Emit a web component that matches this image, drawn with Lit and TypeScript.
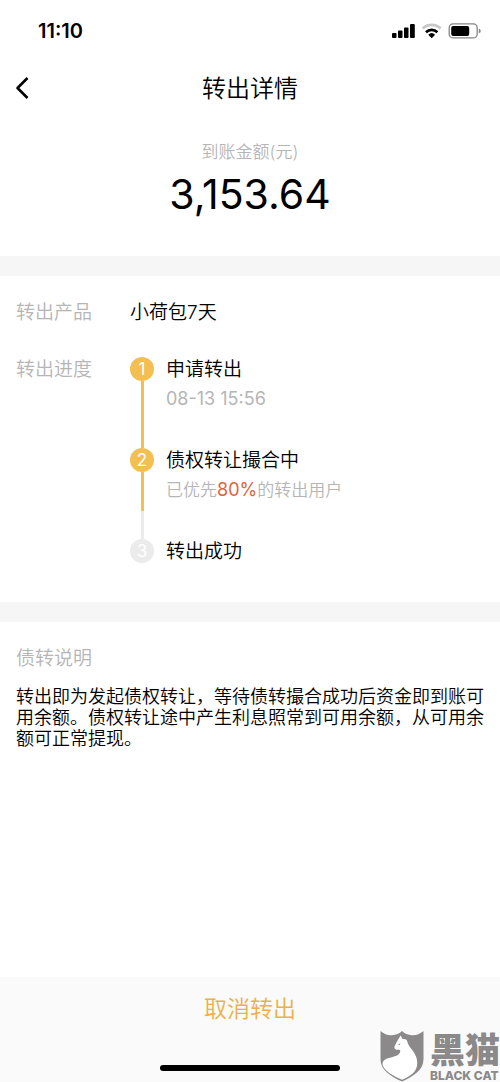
import { LitElement, html, css, nothing } from "lit";
import { customElement, property } from "lit/decorators.js";
import { classMap } from "lit/directives/class-map.js";

const base = css`
  h1,
  h2,
  h3,
  p {
    margin: 0;
  }
`;

@customElement("status-bar")
class StatusBar extends LitElement {
  static styles = [
    base,
    css`
      :host {
        box-sizing: border-box;
        display: flex;
        align-items: center;
        justify-content: space-between;
        height: 60px;
        padding: 2px 18px 0 38px;
      }
      .time {
        font-size: 20px;
        line-height: 24px;
        font-weight: 600;
      }
      .icons {
        display: block;
      }
    `,
  ];

  render() {
    return html`
      <time class="time">11:10</time>
      <svg class="icons" width="92" height="20" viewBox="0 0 92 20" role="img" aria-label="信号 无线网络 电池">
        <rect x="2" y="12" width="4.500" height="5" rx="1" />
        <rect x="8" y="9.500" width="4.500" height="7.500" rx="1" />
        <rect x="14" y="6.500" width="4.500" height="10.500" rx="1" />
        <rect x="20" y="3" width="4.800" height="14" rx="1" />
        <g fill="none" stroke-width="2.8">
          <path d="M32.800 7.400a13 13 0 0 1 17.800 0" stroke="#c8c8c8" />
          <path d="M36 11.200a8.300 8.300 0 0 1 11.400 0" stroke="#000" />
        </g>
        <path d="M38.300 13.700a5 5 0 0 1 6.800 0L41.700 17.200z" />
        <rect x="59.200" y="2.900" width="28" height="14" rx="4" fill="none" stroke="#858585" stroke-width="1.300" />
        <rect x="61.200" y="5" width="18" height="10" rx="2" />
        <path d="M88.800 7.500q2 .8 2 2.400t-2 2.400z" fill="#858585" />
      </svg>
    `;
  }
}

@customElement("progress-step")
class ProgressStep extends LitElement {
  @property({ type: Number }) index = 1;
  @property() title = "";
  @property() state: "done" | "current" | "pending" = "done";

  static styles = [
    base,
    css`
      :host {
        display: grid;
        grid-template-columns: 24px 1fr;
        column-gap: 12px;
      }
      .rail {
        display: flex;
        flex-direction: column;
        align-items: center;
      }
      .dot {
        width: 24px;
        height: 24px;
        border-radius: 50%;
        background: #f3bf51;
        color: #fff;
        font-size: 17px;
        line-height: 24px;
        font-weight: 400;
        text-align: center;
      }
      .pending {
        background: #ebebeb;
      }
      .line {
        flex: 1;
        width: 3px;
        background: #f3bf51;
      }
      .partial {
        background: linear-gradient(#f3bf51 58%, #ebebeb 58%);
      }
      .body {
        min-height: 91px;
      }
      .last {
        min-height: 24px;
      }
      .title {
        font-size: 19px;
        line-height: 26px;
        font-weight: inherit;
      }
      .note {
        margin-top: 4px;
        font-size: 17px;
        line-height: 24px;
        color: #b5b5b5;
      }
    `,
  ];

  render() {
    const pending = this.state === "pending";
    return html`
      <div class="rail">
        <span class=${classMap({ dot: true, pending })}>${this.index}</span>
        ${pending
          ? nothing
          : html`<span class=${classMap({ line: true, partial: this.state === "current" })}></span>`}
      </div>
      <div class=${classMap({ body: true, last: pending })}>
        <h3 class="title">${this.title}</h3>
        ${pending ? nothing : html`<p class="note"><slot></slot></p>`}
      </div>
    `;
  }
}

@customElement("black-cat-mark")
class BlackCatMark extends LitElement {
  static styles = [
    base,
    css`
      :host {
        display: flex;
        align-items: flex-end;
        gap: 6px;
        color: #8b8989;
      }
      .shield {
        display: block;
      }
      .words {
        display: flex;
        flex-direction: column;
      }
      .name {
        font-size: 35px;
        line-height: 38px;
        font-weight: 900;
      }
      .latin {
        font-family: Inter, "Liberation Sans", sans-serif;
        font-size: 12px;
        line-height: 13px;
        font-weight: 800;
        white-space: nowrap;
      }
    `,
  ];

  render() {
    return html`
      <svg class="shield" width="44" height="52" viewBox="0 0 44 52" aria-hidden="true">
        <path
          d="M.5 1C4 4 8 5.500 12 5.200 16 5 19.500 3.500 22 1 24.500 3.500 28 5 32 5.200 36 5.500 40 4 43.500 1V29C43.500 40 34 46 22 51.500 10 46 .5 40 .5 29z"
          fill="#8b8989"
        />
        <path
          d="M20.500 5.500C21.500 6.500 22 7.700 22.500 9 23.800 8.800 25.300 9 26.500 9.800 27.500 11.500 27.500 13 28.500 14.800 30.500 18.500 34 21.500 36 26.500 38.500 33 37.500 40 31.500 44.500 28.500 46.700 25.500 48.300 22 49.800 13.500 46 6 42 3 36 1.800 33 3 30 7 28.500 12 26.800 18 26.500 20 22.500 20.500 21 20.300 20 19 19.800 17 20 15 19.600 14.500 18 14 16.500 15.200 15.500 16 13.500 17 11 18.500 9.500 20.500 5.500z"
          fill="#fff"
        />
        <path d="M18 14.500l2.500-1.300-.8 1.800z" fill="#8b8989" />
      </svg>
      <div class="words">
        <span class="name">黑猫</span>
        <span class="latin">BLACK CAT</span>
      </div>
    `;
  }
}

@customElement("app-root")
class AppRoot extends LitElement {
  static styles = [
    base,
    css`
      :host {
        position: relative;
        display: flex;
        flex-direction: column;
        min-height: 100vh;
        overflow: hidden;
        background: #fff;
        color: #000;
        font-family: Inter, "Noto Sans CJK SC", sans-serif;
        font-weight: 350;
      }
      .nav {
        display: grid;
        grid-template-columns: 48px 1fr 48px;
        align-items: center;
        height: 56px;
      }
      .back {
        display: flex;
        align-items: center;
        height: 48px;
        padding: 0 0 0 15px;
        border: 0;
        background: none;
      }
      .heading {
        padding-top: 2px;
        font-size: 24px;
        line-height: 32px;
        font-weight: inherit;
        text-align: center;
      }
      .summary {
        padding: 24px 16px 36px;
        text-align: center;
      }
      .caption {
        font-size: 17px;
        line-height: 24px;
        color: #b5b5b5;
      }
      .amount {
        margin-top: 4px;
        font-size: 41px;
        line-height: 52px;
        font-weight: 400;
      }
      .section {
        border-top: 20px solid #f6f6f6;
        padding: 24px 16px 37px;
      }
      .row {
        display: grid;
        grid-template-columns: 114px 1fr;
      }
      .row + .row {
        margin-top: 31px;
      }
      .label {
        font-size: 19px;
        line-height: 26px;
        font-weight: inherit;
        color: #b5b5b5;
      }
      .value {
        font-size: 19px;
        line-height: 26px;
      }
      .figure {
        font-size: 18px;
        font-weight: 400;
      }
      .hot {
        color: #e0643c;
      }
      .text {
        margin-top: 14px;
        font-size: 18px;
        line-height: 21px;
      }
      .footer {
        box-sizing: border-box;
        margin-top: auto;
        display: flex;
        flex-direction: column;
        align-items: center;
        justify-content: space-between;
        height: 105px;
        padding: 8px 0 11px;
        background: #fafafa;
      }
      .cancel {
        width: 100%;
        height: 48px;
        border: 0;
        background: none;
        color: #ebb04a;
        font: inherit;
        font-size: 23px;
        line-height: 32px;
      }
      .home {
        width: 36%;
        height: 6px;
        border-radius: 3px;
        background: #000;
      }
      .mark {
        position: absolute;
        right: 0;
        bottom: 0;
      }
    `,
  ];

  render() {
    return html`
      <status-bar></status-bar>
      <header class="nav">
        <button class="back" aria-label="返回">
          <svg width="14" height="24" viewBox="0 0 14 24" fill="none" stroke="#000" stroke-width="2.600">
            <path d="M12.500 2 2.500 12l10 10" stroke-linejoin="round" />
          </svg>
        </button>
        <h1 class="heading">转出详情</h1>
      </header>
      <section class="summary">
        <p class="caption">到账金额(元)</p>
        <p class="amount">3,153.64</p>
      </section>
      <section class="section">
        <div class="row">
          <span class="label">转出产品</span>
          <span class="value">小荷包7天</span>
        </div>
        <div class="row">
          <span class="label">转出进度</span>
          <div>
            <progress-step index="1" title="申请转出"><span class="figure">08-13 15:56</span></progress-step>
            <progress-step index="2" title="债权转让撮合中" state="current"
              >已优先<span class="figure hot">80%</span>的转出用户</progress-step
            >
            <progress-step index="3" title="转出成功" state="pending"></progress-step>
          </div>
        </div>
      </section>
      <section class="section">
        <h2 class="label">债转说明</h2>
        <p class="text">
          转出即为发起债权转让，等待债转撮合成功后资金即到账可用余额。债权转让途中产生利息照常到可用余额，从可用余额可正常提现。
        </p>
      </section>
      <footer class="footer">
        <button class="cancel">取消转出</button>
        <div class="home"></div>
      </footer>
      <black-cat-mark class="mark"></black-cat-mark>
    `;
  }
}
